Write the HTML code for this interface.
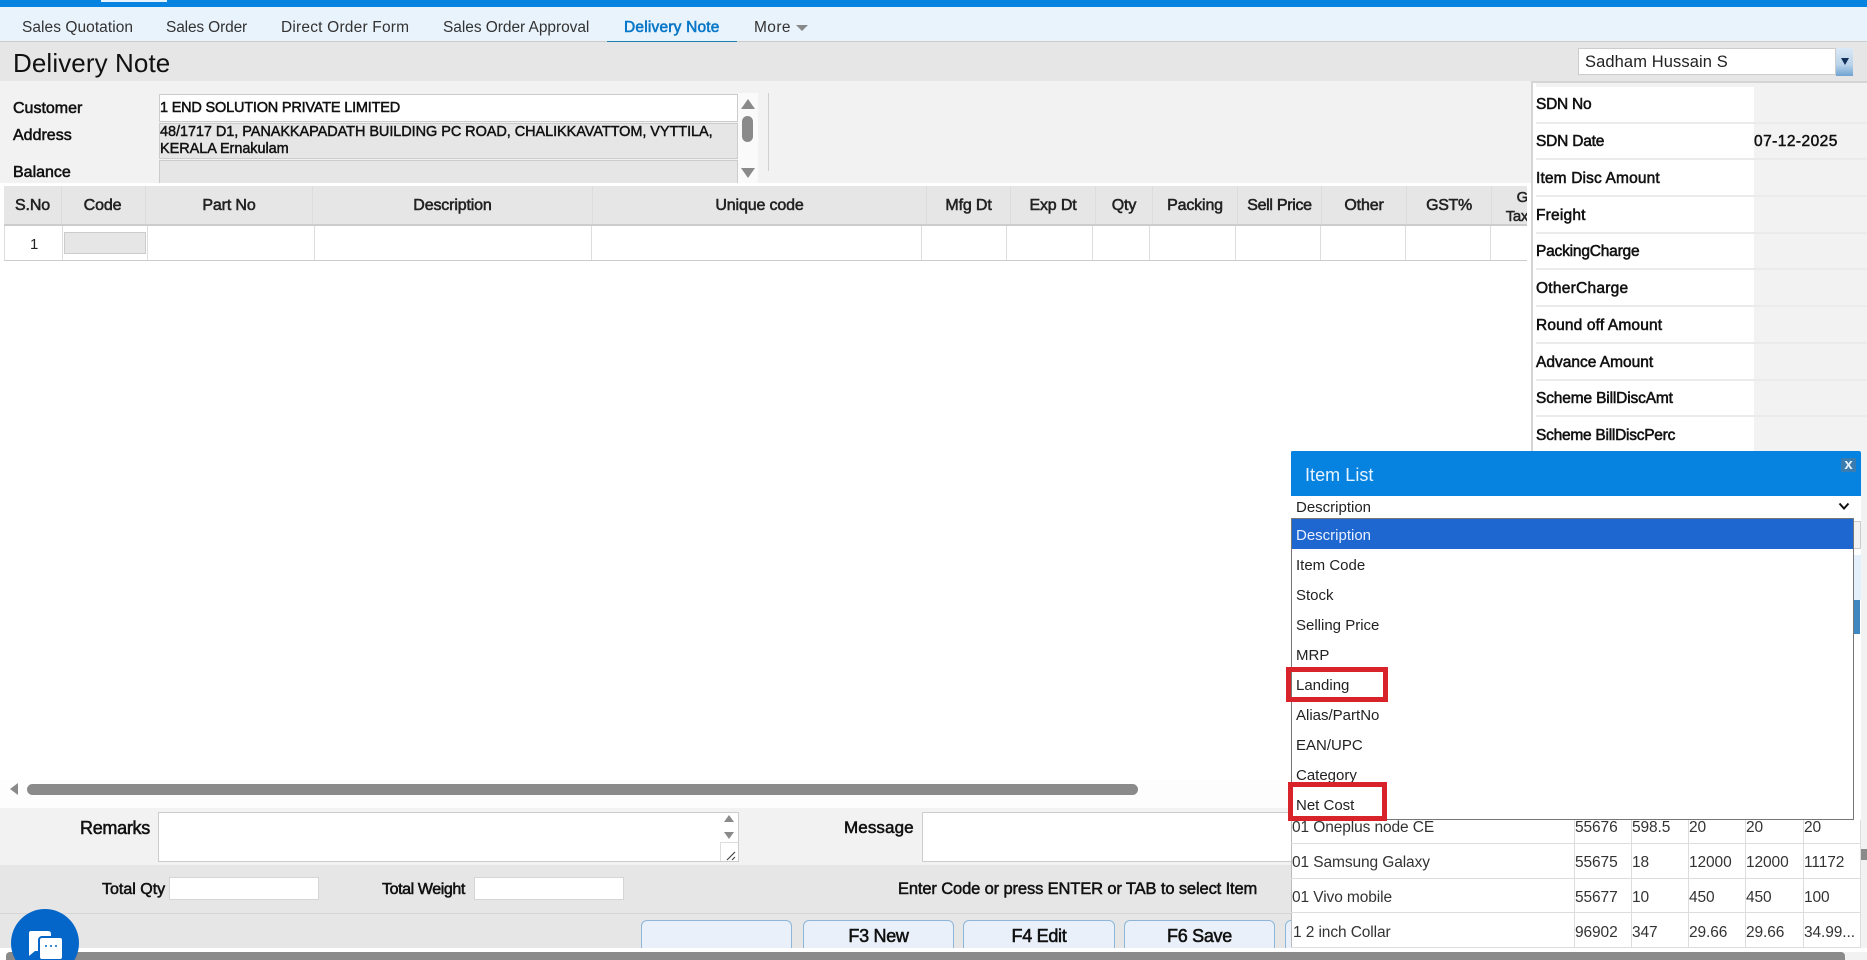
<!DOCTYPE html>
<html><head><meta charset="utf-8"><title>Delivery Note</title>
<style>
*{box-sizing:border-box}
html,body{margin:0;padding:0;width:1867px;height:960px;overflow:hidden;background:#fff}
body{position:relative;font-family:"Liberation Sans",sans-serif;color:#111}
.a{position:absolute}
.t{position:absolute;white-space:nowrap;letter-spacing:-.35px}
.n{font-size:15.5px;line-height:20px;top:18px;color:#333}
.f{font-size:16px;line-height:20px;letter-spacing:0;-webkit-text-stroke:.55px #111}
.h{font-size:16px;line-height:20px;top:196px;letter-spacing:-.15px;-webkit-text-stroke:.55px #222;text-align:center;color:#222}
.v{position:absolute;width:1px;background:#ddd}
.p{position:absolute;left:1536px;width:218px;height:35px;background:#fff}
.pl{position:absolute;left:1536px;font-size:15.5px;line-height:20px;white-space:nowrap;letter-spacing:-.25px;-webkit-text-stroke:.55px #111}
.s{position:absolute;left:1536px;width:331px;height:2px;background:#ebebeb}
.o{position:absolute;left:1296px;font-size:15px;line-height:20px;white-space:nowrap;color:#222}
.r{font-size:15.5px;line-height:20px;color:#333;letter-spacing:-.1px}
.b{position:absolute;top:920px;height:40px;width:151px;background:#e9f0f9;border:1px solid #8db6d8;border-radius:6px;font-size:18px;text-align:center;line-height:31px;letter-spacing:-.3px;-webkit-text-stroke:.55px #111}
.rb{position:absolute;border:5px solid #d8232a}
</style></head><body>
<!-- top bar -->
<div class="a" style="left:0;top:0;width:1867px;height:7px;background:#0682e0"></div>
<div class="a" style="left:101px;top:0;width:66px;height:2px;background:#e9f3fc"></div>
<div class="a" style="left:0;top:7px;width:1867px;height:35px;background:#e9f3fc;border-bottom:1px solid #ccc"></div>
<div class="t n" style="left:22px;letter-spacing:.05px">Sales Quotation</div>
<div class="t n" style="left:166px;letter-spacing:-.15px">Sales Order</div>
<div class="t n" style="left:281px;letter-spacing:.2px">Direct Order Form</div>
<div class="t n" style="left:443px;letter-spacing:-.05px">Sales Order Approval</div>
<div class="t n" style="left:624px;color:#0a78c8;letter-spacing:.2px;-webkit-text-stroke:.6px #0a78c8">Delivery Note</div>
<div class="t n" style="left:754px;letter-spacing:.4px">More</div>
<div class="a" style="left:796px;top:25px;width:0;height:0;border-left:6px solid transparent;border-right:6px solid transparent;border-top:6px solid #888"></div>
<div class="a" style="left:607px;top:41px;width:130px;height:2px;background:#1f7fb0"></div>
<!-- title -->
<div class="a" style="left:0;top:42px;width:1867px;height:39px;background:#e6e6e6"></div>
<div class="t" style="left:13px;top:47px;font-size:26px;line-height:32px;letter-spacing:.1px;color:#111">Delivery Note</div>
<div class="a" style="left:1578px;top:48px;width:258px;height:27px;background:#fff;border:1px solid #ccc"></div>
<div class="t" style="left:1585px;top:52px;font-size:16.5px;line-height:20px;letter-spacing:.1px;color:#222">Sadham Hussain S</div>
<div class="a" style="left:1836px;top:48px;width:17px;height:28px;background:linear-gradient(#dbe9f7,#b9d3ea 60%,#6ea3d0)"></div>
<div class="a" style="left:1841px;top:58px;width:0;height:0;border-left:4px solid transparent;border-right:4px solid transparent;border-top:7px solid #12305a"></div>
<!-- form -->
<div class="a" style="left:0;top:81px;width:1531px;height:102px;background:#f2f2f2"></div>
<div class="t f" style="left:13px;top:99px">Customer</div>
<div class="t f" style="left:13px;top:126px">Address</div>
<div class="t f" style="left:13px;top:163px">Balance</div>
<div class="a" style="left:159px;top:94px;width:579px;height:28px;background:#fff;border:1px solid #ccc"></div>
<div class="t" style="left:160px;top:98px;font-size:14.5px;line-height:20px;letter-spacing:-.2px;-webkit-text-stroke:.5px #111">1 END SOLUTION PRIVATE LIMITED</div>
<div class="a" style="left:159px;top:123px;width:579px;height:36px;background:#e6e6e6;border:1px solid #ccc"></div>
<div class="t" style="left:160px;top:124px;font-size:14.5px;line-height:17px;letter-spacing:-.07px;-webkit-text-stroke:.45px #111">48/1717 D1, PANAKKAPADATH BUILDING PC ROAD, CHALIKKAVATTOM, VYTTILA,<br>KERALA Ernakulam</div>
<div class="a" style="left:159px;top:160px;width:579px;height:23px;background:#e6e6e6;border:1px solid #ccc;border-bottom:0"></div>
<div class="a" style="left:738px;top:93px;width:20px;height:90px;background:#fafafa"></div>
<div class="a" style="left:741px;top:99px;width:0;height:0;border-left:7px solid transparent;border-right:7px solid transparent;border-bottom:10px solid #8a8a8a"></div>
<div class="a" style="left:742px;top:116px;width:11px;height:26px;border-radius:6px;background:#8a8a8a"></div>
<div class="a" style="left:741px;top:168px;width:0;height:0;border-left:7px solid transparent;border-right:7px solid transparent;border-top:10px solid #8a8a8a"></div>
<div class="a" style="left:768px;top:93px;width:1px;height:78px;background:#d0d0d0"></div>
<!-- table -->
<div class="a" style="left:4px;top:186px;width:1523px;height:38px;background:#e6e6e6"></div>
<div class="a" style="left:4px;top:224px;width:1523px;height:2px;background:#ccc"></div>
<div class="v" style="left:61px;top:186px;height:38px"></div><div class="v" style="left:145px;top:186px;height:38px"></div><div class="v" style="left:312px;top:186px;height:38px"></div><div class="v" style="left:592px;top:186px;height:38px"></div><div class="v" style="left:926px;top:186px;height:38px"></div><div class="v" style="left:1010px;top:186px;height:38px"></div><div class="v" style="left:1095px;top:186px;height:38px"></div><div class="v" style="left:1152px;top:186px;height:38px"></div><div class="v" style="left:1237px;top:186px;height:38px"></div><div class="v" style="left:1321px;top:186px;height:38px"></div><div class="v" style="left:1406px;top:186px;height:38px"></div><div class="v" style="left:1491px;top:186px;height:38px"></div>
<div class="t h" style="left:4px;width:57px">S.No</div>
<div class="t h" style="left:61px;width:83px">Code</div>
<div class="t h" style="left:146px;width:166px">Part No</div>
<div class="t h" style="left:313px;width:279px">Description</div>
<div class="t h" style="left:593px;width:333px">Unique code</div>
<div class="t h" style="left:927px;width:83px">Mfg Dt</div>
<div class="t h" style="left:1011px;width:84px">Exp Dt</div>
<div class="t h" style="left:1096px;width:56px">Qty</div>
<div class="t h" style="left:1153px;width:84px">Packing</div>
<div class="t h" style="left:1238px;width:83px;letter-spacing:-.3px">Sell Price</div>
<div class="t h" style="left:1322px;width:84px">Other</div>
<div class="t h" style="left:1407px;width:84px;letter-spacing:-.35px">GST%</div>
<div class="a" style="left:1492px;top:186px;width:35px;height:38px;overflow:hidden"><div class="t" style="left:16px;top:2px;font-size:15px;line-height:19px;color:#222;-webkit-text-stroke:.5px #222;text-align:right;width:20px">G<br><span style="margin-left:-10px">Tax</span></div></div>
<div class="a" style="left:4px;top:260px;width:1523px;height:1px;background:#ccc"></div>
<div class="v" style="left:4px;top:226px;height:34px"></div><div class="v" style="left:62px;top:226px;height:34px"></div><div class="v" style="left:147px;top:226px;height:34px"></div><div class="v" style="left:314px;top:226px;height:34px"></div><div class="v" style="left:591px;top:226px;height:34px"></div><div class="v" style="left:921px;top:226px;height:34px"></div><div class="v" style="left:1006px;top:226px;height:34px"></div><div class="v" style="left:1092px;top:226px;height:34px"></div><div class="v" style="left:1149px;top:226px;height:34px"></div><div class="v" style="left:1235px;top:226px;height:34px"></div><div class="v" style="left:1320px;top:226px;height:34px"></div><div class="v" style="left:1405px;top:226px;height:34px"></div><div class="v" style="left:1490px;top:226px;height:34px"></div>
<div class="t" style="left:30px;top:235px;font-size:15px;line-height:20px;color:#222">1</div>
<div class="a" style="left:64px;top:232px;width:82px;height:22px;background:#e6e6e6;border:1px solid #ccc"></div>
<!-- right panel -->
<div class="a" style="left:1527px;top:81px;width:340px;height:879px;background:#f2f2f2"></div>
<div class="a" style="left:1527px;top:183px;width:4px;height:600px;background:#fff"></div>
<div class="a" style="left:1531px;top:81px;width:2px;height:375px;background:#d5d5d5"></div>
<div class="a" style="left:1533px;top:81px;width:334px;height:2px;background:#d5d5d5"></div>
<div class="a" style="left:1533px;top:83px;width:3px;height:373px;background:#fff"></div>
<div class="p" style="top:87px"></div><div class="s" style="top:122px"></div>
<div class="p" style="top:124px"></div><div class="s" style="top:158px"></div>
<div class="p" style="top:160px"></div><div class="s" style="top:195px"></div>
<div class="p" style="top:197px"></div><div class="s" style="top:232px"></div>
<div class="p" style="top:234px"></div><div class="s" style="top:268px"></div>
<div class="p" style="top:270px"></div><div class="s" style="top:305px"></div>
<div class="p" style="top:307px"></div><div class="s" style="top:342px"></div>
<div class="p" style="top:344px"></div><div class="s" style="top:379px"></div>
<div class="p" style="top:381px"></div><div class="s" style="top:415px"></div>
<div class="p" style="top:417px"></div>
<div class="pl" style="top:95px">SDN No</div>
<div class="pl" style="top:132px;letter-spacing:-.2px">SDN Date</div>
<div class="t" style="left:1754px;top:132px;font-size:15.5px;line-height:20px;letter-spacing:.45px;-webkit-text-stroke:.5px #111">07-12-2025</div>
<div class="pl" style="top:169px;letter-spacing:.15px">Item Disc Amount</div>
<div class="pl" style="top:206px;letter-spacing:.2px">Freight</div>
<div class="pl" style="top:242px;letter-spacing:-.2px">PackingCharge</div>
<div class="pl" style="top:279px;letter-spacing:.25px">OtherCharge</div>
<div class="pl" style="top:316px;letter-spacing:.15px">Round off Amount</div>
<div class="pl" style="top:353px;letter-spacing:0">Advance Amount</div>
<div class="pl" style="top:389px;letter-spacing:-.15px">Scheme BillDiscAmt</div>
<div class="pl" style="top:426px;letter-spacing:-.25px">Scheme BillDiscPerc</div>
<!-- hscroll -->
<div class="a" style="left:0;top:780px;width:1291px;height:28px;background:#fdfdfd"></div>
<div class="a" style="left:10px;top:783px;width:0;height:0;border-top:6px solid transparent;border-bottom:6px solid transparent;border-right:8px solid #8a8a8a"></div>
<div class="a" style="left:27px;top:784px;width:1111px;height:11px;border-radius:6px;background:#8a8a8a"></div>
<!-- remarks -->
<div class="a" style="left:0;top:808px;width:1291px;height:57px;background:#f2f2f2"></div>
<div class="t" style="left:80px;top:817px;font-size:18px;line-height:22px;letter-spacing:-.3px;-webkit-text-stroke:.55px #111">Remarks</div>
<div class="a" style="left:158px;top:812px;width:581px;height:50px;background:#fff;border:1px solid #ccc"></div>
<div class="a" style="left:724px;top:815px;width:0;height:0;border-left:5px solid transparent;border-right:5px solid transparent;border-bottom:7px solid #8a8a8a"></div>
<div class="a" style="left:724px;top:832px;width:0;height:0;border-left:5px solid transparent;border-right:5px solid transparent;border-top:7px solid #8a8a8a"></div>
<div class="a" style="left:720px;top:842px;width:18px;height:19px;background:#fff;border:1px solid #ddd;border-width:1px 0 0 1px"></div>
<svg class="a" style="left:726px;top:850px" width="11" height="11"><path d="M1 10 L9 2 M6 10 L9 7" stroke="#444" stroke-width="1.2" fill="none"/></svg>
<div class="t" style="left:844px;top:817px;font-size:17px;line-height:22px;letter-spacing:.1px;-webkit-text-stroke:.55px #111">Message</div>
<div class="a" style="left:922px;top:812px;width:380px;height:50px;background:#fff;border:1px solid #ccc"></div>
<!-- totals -->
<div class="a" style="left:0;top:865px;width:1291px;height:48px;background:#e6e6e6"></div>
<div class="a" style="left:0;top:913px;width:1291px;height:1px;background:#d5d5d5"></div>
<div class="t f" style="left:102px;top:880px;font-size:16px;letter-spacing:0">Total Qty</div>
<div class="a" style="left:169px;top:877px;width:150px;height:23px;background:#fff;border:1px solid #d5d5d5"></div>
<div class="t f" style="left:382px;top:880px;font-size:16px;letter-spacing:-.4px">Total Weight</div>
<div class="a" style="left:474px;top:877px;width:150px;height:23px;background:#fff;border:1px solid #d5d5d5"></div>
<div class="t" style="left:898px;top:879px;font-size:16.5px;line-height:20px;letter-spacing:-.13px;-webkit-text-stroke:.5px #111">Enter Code or press ENTER or TAB to select Item</div>
<div class="a" style="left:0;top:914px;width:1291px;height:34px;background:#e6e6e6"></div>
<!-- buttons -->
<div class="b" style="left:641px"></div>
<div class="b" style="left:803px">F3 New</div>
<div class="b" style="left:963px;width:152px">F4 Edit</div>
<div class="b" style="left:1124px">F6 Save</div>
<div class="b" style="left:1285px"></div>
<div class="a" style="left:0;top:948px;width:1867px;height:4px;background:#fff"></div>
<div class="a" style="left:6px;top:952px;width:1839px;height:8px;background:#8a8a8a;border-radius:4px 4px 0 0"></div>
<!-- modal -->
<div class="a" style="left:1291px;top:451px;width:570px;height:497px;background:#fff;border-left:1px solid #bbb"></div>
<div class="a" style="left:1291px;top:451px;width:570px;height:45px;background:#0682e0;border-radius:2px 2px 0 0"></div>
<div class="t" style="left:1305px;top:464px;font-size:18px;line-height:22px;letter-spacing:.05px;color:#e6f4ff">Item List</div>
<div class="a" style="left:1841px;top:458px;width:15px;height:14px;background:#3a7cb0;color:#e8f2fa;font-size:15px;line-height:13px;font-weight:bold;text-align:center">x</div>
<!-- list behind -->
<div class="a" style="left:1854px;top:521px;width:7px;height:28px;background:#f2f2f2;border:1px solid #ccc;border-left:0"></div>
<div class="a" style="left:1854px;top:555px;width:7px;height:45px;background:#e3f0fb"></div>
<div class="a" style="left:1854px;top:600px;width:6px;height:34px;background:#3f87c0"></div>
<div class="a" style="left:1291px;top:843px;width:569px;height:1px;background:#ddd"></div>
<div class="a" style="left:1291px;top:878px;width:569px;height:1px;background:#ddd"></div>
<div class="a" style="left:1291px;top:912px;width:569px;height:1px;background:#ddd"></div>
<div class="a" style="left:1291px;top:947px;width:569px;height:1px;background:#ddd"></div>
<div class="v" style="left:1574px;top:820px;height:128px"></div><div class="v" style="left:1631px;top:820px;height:128px"></div><div class="v" style="left:1688px;top:820px;height:128px"></div><div class="v" style="left:1745px;top:820px;height:128px"></div><div class="v" style="left:1803px;top:820px;height:128px"></div><div class="v" style="left:1860px;top:820px;height:128px"></div>
<div class="t r" style="left:1292px;top:818px">01 Oneplus node CE</div>
<div class="t r" style="left:1575px;top:818px">55676</div><div class="t r" style="left:1632px;top:818px">598.5</div><div class="t r" style="left:1689px;top:818px">20</div><div class="t r" style="left:1746px;top:818px">20</div><div class="t r" style="left:1804px;top:818px">20</div>
<div class="t r" style="left:1292px;top:853px">01 Samsung Galaxy</div>
<div class="t r" style="left:1575px;top:853px">55675</div><div class="t r" style="left:1632px;top:853px">18</div><div class="t r" style="left:1689px;top:853px">12000</div><div class="t r" style="left:1746px;top:853px">12000</div><div class="t r" style="left:1804px;top:853px">11172</div>
<div class="t r" style="left:1292px;top:888px">01 Vivo mobile</div>
<div class="t r" style="left:1575px;top:888px">55677</div><div class="t r" style="left:1632px;top:888px">10</div><div class="t r" style="left:1689px;top:888px">450</div><div class="t r" style="left:1746px;top:888px">450</div><div class="t r" style="left:1804px;top:888px">100</div>
<div class="t r" style="left:1293px;top:923px">1 2 inch Collar</div>
<div class="t r" style="left:1575px;top:923px">96902</div><div class="t r" style="left:1632px;top:923px">347</div><div class="t r" style="left:1689px;top:923px">29.66</div><div class="t r" style="left:1746px;top:923px">29.66</div><div class="t r" style="left:1804px;top:923px">34.99...</div>
<div class="a" style="left:1861px;top:849px;width:6px;height:11px;background:#8a8a8a"></div>
<!-- select -->
<div class="a" style="left:1291px;top:496px;width:563px;height:22px;background:#fff"></div>
<div class="t" style="left:1296px;top:498px;font-size:15px;line-height:20px;letter-spacing:0;color:#222">Description</div>
<svg class="a" style="left:1838px;top:502px" width="12" height="9"><path d="M1.5 1.5 L6 6.5 L10.5 1.5" stroke="#111" stroke-width="2" fill="none"/></svg>
<div class="a" style="left:1291px;top:518px;width:563px;height:302px;background:#fff;border:1px solid #767676"></div>
<div class="a" style="left:1292px;top:519px;width:561px;height:30px;background:#1e66d0"></div>
<div class="o" style="top:526px;color:#e8f0ff">Description</div>
<div class="o" style="top:556px">Item Code</div>
<div class="o" style="top:586px">Stock</div>
<div class="o" style="top:616px">Selling Price</div>
<div class="o" style="top:646px">MRP</div>
<div class="o" style="top:676px">Landing</div>
<div class="o" style="top:706px">Alias/PartNo</div>
<div class="o" style="top:736px">EAN/UPC</div>
<div class="o" style="top:766px">Category</div>
<div class="o" style="top:796px">Net Cost</div>
<div class="rb" style="left:1286px;top:667px;width:102px;height:35px"></div>
<div class="rb" style="left:1288px;top:782px;width:99px;height:39px"></div>
<!-- chat -->
<div class="a" style="left:11px;top:909px;width:68px;height:68px;border-radius:50%;background:#0466c8"></div>
<svg class="a" style="left:26px;top:928px" width="40" height="32">
<path d="M5 3 H22 Q25 3 25 6 V20 Q25 23 22 23 H9 L3 28 V5 Q3 3 5 3 Z" fill="#fff"/>
<rect x="13" y="9" width="24" height="23" rx="3" fill="#fff" stroke="#0466c8" stroke-width="2"/>
<circle cx="20" cy="18" r="1" fill="#0466c8"/><circle cx="25" cy="18" r="1" fill="#0466c8"/><circle cx="30" cy="18" r="1" fill="#0466c8"/>
</svg>
</body></html>
